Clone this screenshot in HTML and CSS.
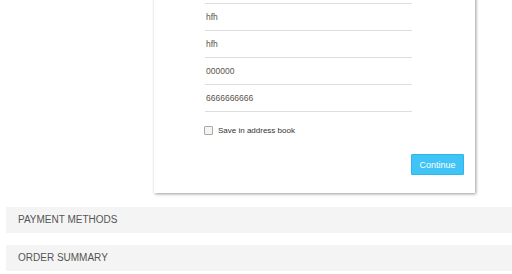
FILE: index.html
```html
<!DOCTYPE html>
<html>
	<head>
		<title>Checkout</title>
		<meta charset="utf-8" />
		<link rel="stylesheet" href="styles.css">
	</head>
<body>
	<div id="checkout">
		<div class="card">
			<div class="fields">
				<div class="field"></div>
				<div class="field">hfh</div>
				<div class="field">hfh</div>
				<div class="field">000000</div>
				<div class="field">6666666666</div>
				<label class="save"><span class="box"></span>Save in address book</label>
			</div>
			<div class="actions">
				<button class="continue">Continue</button>
			</div>
		</div>
		<div class="step">PAYMENT METHODS</div>
		<div class="step">ORDER SUMMARY</div>
	</div>
</body>
</html>
```

FILE: styles.css
```css
body {
	margin: 0;
	background-color: #fff;
	font-family: "Liberation Sans", Arial, sans-serif;
	overflow: hidden;
}
div#checkout {
	margin-top: -23px;
	padding: 0 0 0 6px;
}
.card {
	margin-left: 148px;
	width: 321px;
	background-color: #fff;
	box-shadow: 1px 1px 3px rgba(0,0,0,0.4);
	padding-bottom: 18px;
}
.fields {
	padding-left: 51px;
	width: 207px;
}
.field {
	height: 26px;
	line-height: 26px;
	border-bottom: solid 1px #ddd;
	font-size: 8.5px;
	color: #5a5248;
	padding-left: 1px;
}
label.save {
	display: flex;
	align-items: center;
	height: 22px;
	margin-top: 7px;
	font-size: 8px;
	color: #333;
}
.box {
	width: 7px;
	height: 7px;
	border: solid 1px #aaa;
	border-radius: 1px;
	background-color: #f4f4f4;
	margin-left: -1px;
	margin-right: 5px;
}
.actions {
	display: flex;
	justify-content: flex-end;
	padding-right: 11px;
	margin-top: 13px;
}
button.continue {
	width: 53px;
	height: 21px;
	padding: 0;
	border: solid 1px #2fb6ec;
	border-radius: 1px;
	background-color: #40c3f5;
	color: #fff;
	font-family: "Liberation Sans", Arial, sans-serif;
	font-size: 9px;
}
.step {
	background-color: #f4f4f4;
	height: 26px;
	line-height: 26px;
	padding-left: 12px;
	font-size: 10px;
	color: #555;
	margin-top: 14px;
}
.step + .step {
	margin-top: 12px;
}
```
